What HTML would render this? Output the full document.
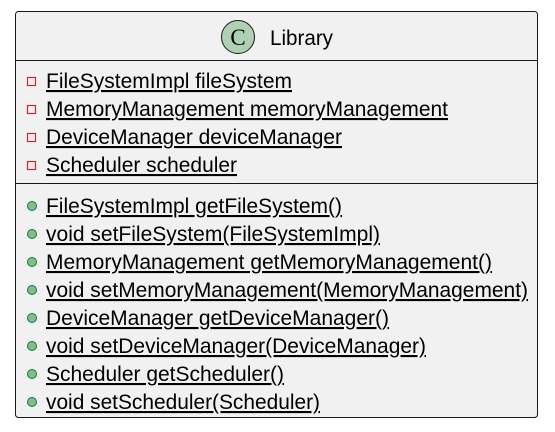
<!DOCTYPE html>
<html><head><meta charset="utf-8"><style>
html,body{margin:0;padding:0;background:#fff;width:555px;height:432px;overflow:hidden}
text{font-family:"Liberation Sans",sans-serif;font-size:21px;fill:#000}
</style></head><body>
<svg width="555" height="432" viewBox="0 0 555 432" xmlns="http://www.w3.org/2000/svg">
<rect x="15.5" y="11.5" width="522" height="406" rx="3" fill="#f1f1f1" stroke="#181818" stroke-width="1"/>
<line x1="16" y1="60.5" x2="537" y2="60.5" stroke="#181818"/>
<line x1="16" y1="183.5" x2="537" y2="183.5" stroke="#181818"/>
<circle cx="238" cy="37" r="16.5" fill="#add1b2" stroke="#181818"/>
<text x="238" y="45" text-anchor="middle" style="font-family:'Liberation Serif',serif;font-size:23px">C</text>
<text x="270" y="45" textLength="63" lengthAdjust="spacingAndGlyphs">Library</text>
<rect x="27.5" y="77.5" width="8" height="8" fill="none" stroke="#c82930" stroke-width="1.2"/>
<rect x="27.5" y="105.5" width="8" height="8" fill="none" stroke="#c82930" stroke-width="1.2"/>
<rect x="27.5" y="133.5" width="8" height="8" fill="none" stroke="#c82930" stroke-width="1.2"/>
<rect x="27.5" y="161.5" width="8" height="8" fill="none" stroke="#c82930" stroke-width="1.2"/>
<g fill="#84be84" stroke="#038048">
<circle cx="32" cy="206" r="4.5"/><circle cx="32" cy="234" r="4.5"/><circle cx="32" cy="262" r="4.5"/><circle cx="32" cy="290" r="4.5"/>
<circle cx="32" cy="318" r="4.5"/><circle cx="32" cy="346" r="4.5"/><circle cx="32" cy="374" r="4.5"/><circle cx="32" cy="402" r="4.5"/>
</g>
<g text-decoration="underline">
<text x="46" y="88" textLength="246" lengthAdjust="spacingAndGlyphs">FileSystemImpl fileSystem</text>
<text x="46" y="116" textLength="402" lengthAdjust="spacingAndGlyphs">MemoryManagement memoryManagement</text>
<text x="46" y="144" textLength="296" lengthAdjust="spacingAndGlyphs">DeviceManager deviceManager</text>
<text x="46" y="172" textLength="191" lengthAdjust="spacingAndGlyphs">Scheduler scheduler</text>
<text x="46" y="213" textLength="296" lengthAdjust="spacingAndGlyphs">FileSystemImpl getFileSystem()</text>
<text x="46" y="241" textLength="334" lengthAdjust="spacingAndGlyphs">void setFileSystem(FileSystemImpl)</text>
<text x="46" y="269" textLength="446" lengthAdjust="spacingAndGlyphs">MemoryManagement getMemoryManagement()</text>
<text x="46" y="297" textLength="482" lengthAdjust="spacingAndGlyphs">void setMemoryManagement(MemoryManagement)</text>
<text x="46" y="325" textLength="343" lengthAdjust="spacingAndGlyphs">DeviceManager getDeviceManager()</text>
<text x="46" y="353" textLength="380" lengthAdjust="spacingAndGlyphs">void setDeviceManager(DeviceManager)</text>
<text x="46" y="381" textLength="238" lengthAdjust="spacingAndGlyphs">Scheduler getScheduler()</text>
<text x="46" y="409" textLength="274" lengthAdjust="spacingAndGlyphs">void setScheduler(Scheduler)</text>
</g>
</svg>
</body></html>
